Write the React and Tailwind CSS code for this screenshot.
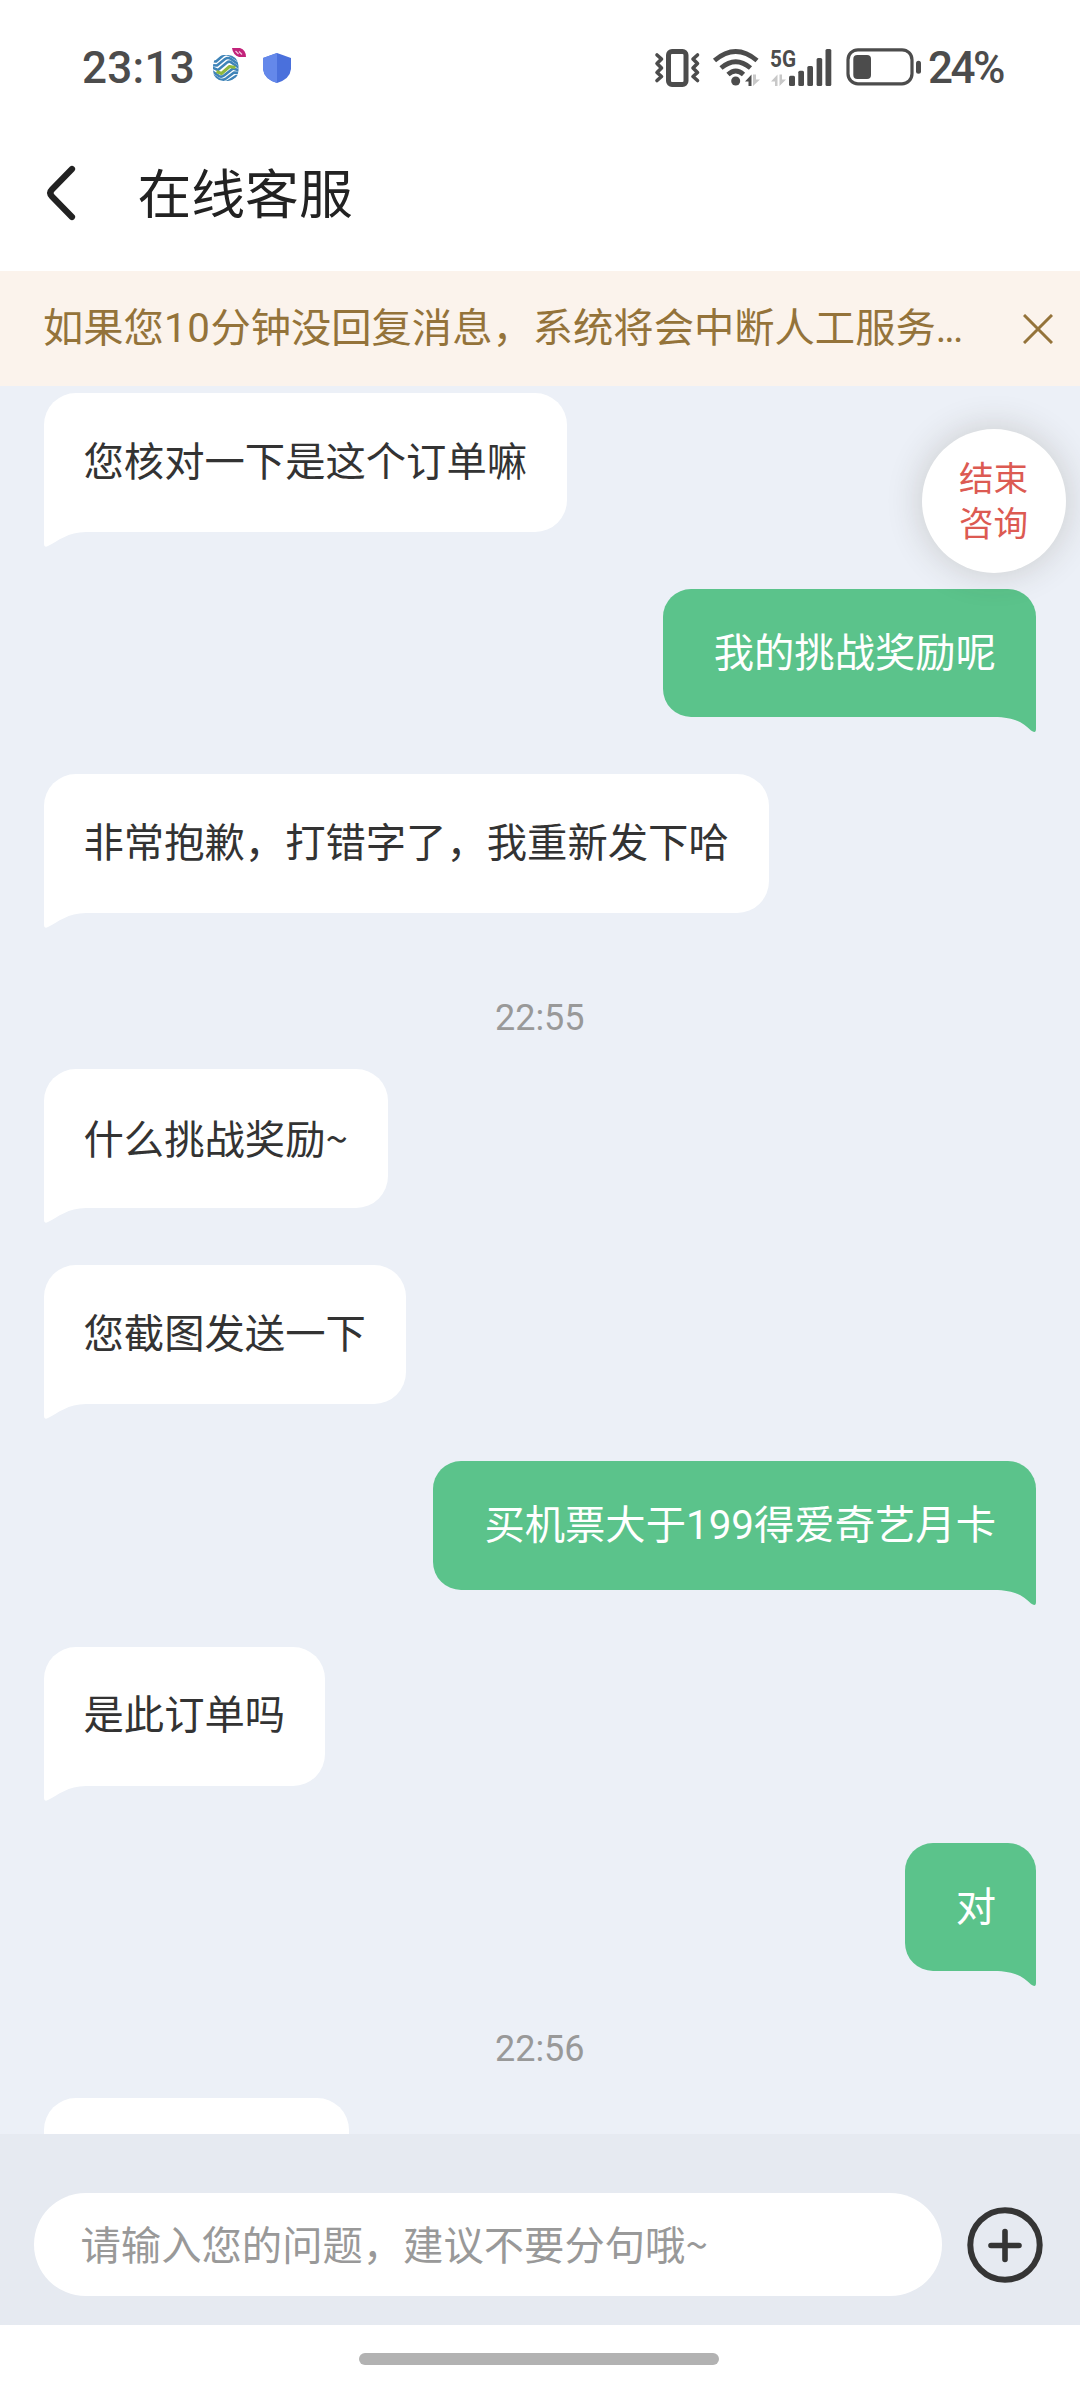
import { useState } from "react";

const MESSAGES = [
    { from: "agent", text: "您核对一下是这个订单嘛" },
    { from: "me", text: "我的挑战奖励呢" },
    { from: "agent", text: "非常抱歉，打错字了，我重新发下哈" },
    { time: "22:55", afterAgent: true },
    { from: "agent", text: "什么挑战奖励~" },
    { from: "agent", text: "您截图发送一下" },
    { from: "me", text: "买机票大于199得爱奇艺月卡" },
    { from: "agent", text: "是此订单吗" },
    { from: "me", text: "对" },
    { time: "22:56" },
    { from: "agent", text: "" },
];

function StatusBar() {
    return (
        <div className="flex h-[116px] shrink-0 items-start pl-[82px] pt-[42px] text-[#4c4c4c]">
            <span className="w-[112px] text-[44px] leading-[52px] font-medium tracking-[0.3px] whitespace-nowrap">23:13</span>

            {/* carrier logo */}
            <svg className="ml-[16px] h-[50px] w-[40px]" viewBox="210 42 40 50" fill="none">
                <clipPath id="globe">
                    <rect x="213" y="55" width="25.500" height="26" rx="10.500" />
                </clipPath>
                <g clipPath="url(#globe)" stroke="#3f84b8" strokeWidth="2.500" strokeLinejoin="round">
                    <path d="M211 61 L216 61.500 L223 55.500 Q226 53 229 55 L241 62" />
                    <path d="M211 65 L217 65.500 L225 59 Q228 57 231 59 L241 66" />
                    <path d="M211 67 L218 70 L227 62.500 Q229.500 60.500 232 63 L241 69" />
                    <path d="M211 70.500 L219 76 Q221.500 77.500 224 75.500 L233 68.500 L241 71" />
                    <path d="M211 74 L219 79 Q222.500 81 226 78.500 L234 72.500 L241 73" />
                    <path d="M216 81 Q224 84 229 80.500 L236 76 L241 76" />
                    <path d="M216.500 71.500 L221.500 73.500 L229.500 66.500 L235.500 67.500" stroke="#8fb83e" strokeWidth="3" />
                </g>
                <path d="M232 48 H240 Q246 50 246 57 H239 Q233 55 232 48Z" fill="#c2237a" />
                <path d="M235.500 51 L238.500 54 M239 51.500 L242 54.500" stroke="#f3c6de" strokeWidth="1.200" />
            </svg>
            <svg className="ml-[10px] h-[50px] w-[34px]" viewBox="260 42 34 50">
                <path d="M277 53 L291 58 V69 Q290 79 277 83 Q264 79 263 69 V58Z" fill="#4a70dc" />
                <path d="M277 53 L263 58 V69 Q264 79 277 83Z" fill="#6488ea" />
            </svg>

            <svg className="ml-[360px] h-[50px] w-[274px] shrink-0" viewBox="654 42 274 50" fill="none">
                {/* vibrate */}
                <rect x="668.500" y="51.500" width="17.500" height="33" rx="3.500" stroke="#4c4c4c" strokeWidth="5" />
                <g stroke="#4c4c4c" strokeWidth="3.600" strokeLinecap="round" strokeLinejoin="round">
                    <path d="M657 55 L661.500 59 L657 63.500 L661.500 68 L657 72.500 L661.500 76.500 L657 80.500" />
                    <path d="M697.500 55 L693 59 L697.500 63.500 L693 68 L697.500 72.500 L693 76.500 L697.500 80.500" />
                </g>
                {/* wifi */}
                <g stroke="#4c4c4c" strokeWidth="4.800">
                    <path d="M714.500 60.500 Q735.700 42.500 757 60.500" />
                    <path d="M721 68 Q735.700 55.500 750.500 68" />
                    <path d="M728 74.500 Q735.700 67.500 743.500 74.500" />
                </g>
                <circle cx="735.700" cy="81" r="4.500" fill="#4c4c4c" />
                <path d="M745 81.500 L751.500 74.500 V86 H748.500 V81.500Z" fill="#4c4c4c" />
                <path d="M753 74.500 V86 L760 79.500 H756 V74.500Z" fill="#c8c8c8" />
                {/* signal */}
                <text x="770" y="66.500" fontSize="24.500" fontWeight="700" fill="#4c4c4c" textLength="26" lengthAdjust="spacingAndGlyphs">5G</text>
                <path d="M771 81.500 L777.500 74.500 V86 H775 V81.500Z M779.500 74.500 V86 L786 79.500 H782 V74.500Z" fill="#c8c8c8" />
                <g fill="#4c4c4c">
                    <rect x="789" y="75.700" width="6" height="10.300" rx="1.500" />
                    <rect x="798.300" y="70.700" width="5.700" height="15.300" rx="1.500" />
                    <rect x="807.300" y="66" width="5.700" height="20" rx="1.500" />
                    <rect x="816.600" y="58" width="5.600" height="28" rx="1.500" />
                    <rect x="825.500" y="49" width="5.800" height="37" rx="1.500" />
                </g>
                {/* battery */}
                <rect x="848" y="49.800" width="64" height="34" rx="10" stroke="#4c4c4c" strokeWidth="3.200" />
                <rect x="853.300" y="55" width="17.700" height="24" rx="4" fill="#4c4c4c" />
                <rect x="916" y="60.700" width="5" height="13" rx="2.500" fill="#4c4c4c" />
            </svg>
            <span className="text-[44px] leading-[52px] font-medium tracking-[-2.5px]">24%</span>
        </div>
    );
}

function Header() {
    return (
        <header className="flex h-[155px] shrink-0 items-start pl-[43.500px] pt-[40px]">
            <svg className="mt-[6px] h-[62px] w-[36px]" viewBox="0 0 36 62" fill="none">
                <path
                    d="M28 7 L8 27.500 Q4.500 31 8 34.500 L28 55"
                    stroke="#222"
                    strokeWidth="6.200"
                    strokeLinecap="round"
                    strokeLinejoin="round"
                />
            </svg>
            <h1 className="mt-[3px] ml-[58px] text-[53.8px] leading-[74px] text-[#222]">在线客服</h1>
        </header>
    );
}

function Notice() {
    return (
        <div className="flex h-[115px] shrink-0 items-center bg-[#fbf3ec] pl-[43px] text-[#94733a]">
            <p className="w-[979.500px] text-[40.3px] leading-[56px] whitespace-nowrap">
                如果您<span className="tracking-[0.6px]">10</span>分钟没回复消息，系统将会中断人工服务
                <span className="tracking-[-2px]">...</span>
            </p>
            <svg className="h-[30px] w-[30px]" viewBox="0 0 30 30" fill="none">
                <path d="M1 1 L29 29 M29 1 L1 29" stroke="#94733a" strokeWidth="3" />
            </svg>
        </div>
    );
}

// the tilde is drawn from the CJK face, which is narrower
function BubbleText({ text }) {
    const tilde = text.endsWith("~");
    return (
        <span className="text-[40.35px] leading-[56px] whitespace-nowrap">
            {tilde ? text.slice(0, -1) : text}
            {tilde && <span className="font-['Noto_Sans_CJK_SC',sans-serif]">~</span>}
        </span>
    );
}

function AgentBubble({ text }) {
    if (!text) return <div className="h-[139px] w-[305px] shrink-0 rounded-t-[32px] bg-white" />;

    return (
        <div className="relative mb-[57px] flex h-[139px] shrink-0 items-center self-start rounded-[32px] rounded-bl-none bg-white px-[40px] text-[#333]">
            <BubbleText text={text} />
            <svg className="absolute top-full left-0 -mt-px h-[16px] w-[42px]" viewBox="0 0 42 16">
                <path d="M0 0 H42 V1 C24 1 14 10 4 15 Q0 17 0 13Z" fill="#fff" />
            </svg>
        </div>
    );
}

function MyBubble({ text }) {
    return (
        <div className="relative mb-[57px] flex h-[128.300px] shrink-0 items-center self-end rounded-[28px] rounded-br-none bg-[#5bc38b] pt-[2px] pr-[40px] pl-[51px] text-white">
            <BubbleText text={text} />
            <svg className="absolute top-full right-0 -mt-px h-[16px] w-[42px]" viewBox="0 0 42 16">
                <path d="M42 0 H0 V1 C21 1 29 7 37 14.500 Q42 18 42 13Z" fill="#5bc38b" />
            </svg>
        </div>
    );
}

export default function App() {
    const [draft, setDraft] = useState("");

    return (
        <div className="relative flex h-[2392px] w-[1080px] flex-col overflow-hidden bg-white font-[Roboto,'Noto_Sans_CJK_SC',sans-serif]">
            <StatusBar />
            <Header />
            <Notice />

            {/* conversation */}
            <main className="relative flex h-[1748px] shrink-0 flex-col overflow-hidden bg-[#ecf0f7] pt-[7px] pr-[44px] pl-[43.500px]">
                {MESSAGES.map((m, i) => {
                    if (m.time)
                        return (
                            <time
                                key={i}
                                className={
                                    m.afterAgent
                                        ? "h-[99px] shrink-0 pt-[27px] text-center text-[36px] leading-[42px] text-[#999]"
                                        : "-mt-px h-[71px] shrink-0 pt-px text-center text-[36px] leading-[42px] text-[#999]"
                                }
                            >
                                {m.time}
                            </time>
                        );
                    return m.from === "me" ? <MyBubble key={i} text={m.text} /> : <AgentBubble key={i} text={m.text} />;
                })}
            </main>

            {/* floating end-chat button */}
            <button className="absolute top-[429px] right-[14.500px] h-[144px] w-[144px] rounded-full bg-white pt-[2px] text-[34.6px] leading-[45px] text-[#dc5a52] shadow-[0_0_36px_rgba(60,50,30,0.2)]">
                结束
                <br />
                咨询
            </button>

            {/* input bar */}
            <footer className="flex h-[191px] shrink-0 items-start bg-[#e6eaf1] pt-[59px] pl-[34px]">
                <div className="relative h-[103px] w-[907.500px]">
                    <input
                        className="h-full w-full rounded-full bg-white px-[47px] text-[40.35px] text-[#333] outline-none"
                        value={draft}
                        onChange={(e) => setDraft(e.target.value)}
                    />
                    {!draft && (
                        <div className="pointer-events-none absolute inset-0 flex items-center pl-[46.500px] text-[#999]">
                            <BubbleText text="请输入您的问题，建议不要分句哦~" />
                        </div>
                    )}
                </div>
                <svg className="mt-[13.500px] ml-[25.500px] h-[76px] w-[76px]" viewBox="0 0 76 76" fill="none" stroke="#353535" strokeLinecap="round">
                    <circle cx="38" cy="38" r="34.700" strokeWidth="6" />
                    <path d="M38 24.500 V52.500 M24 38.500 H52" strokeWidth="5.600" />
                </svg>
            </footer>

            {/* home indicator */}
            <div className="flex h-[67px] shrink-0 justify-center pt-[28px] pr-[2px]">
                <div className="h-[12px] w-[360px] rounded-full bg-[#b2b2b2]" />
            </div>
        </div>
    );
}
